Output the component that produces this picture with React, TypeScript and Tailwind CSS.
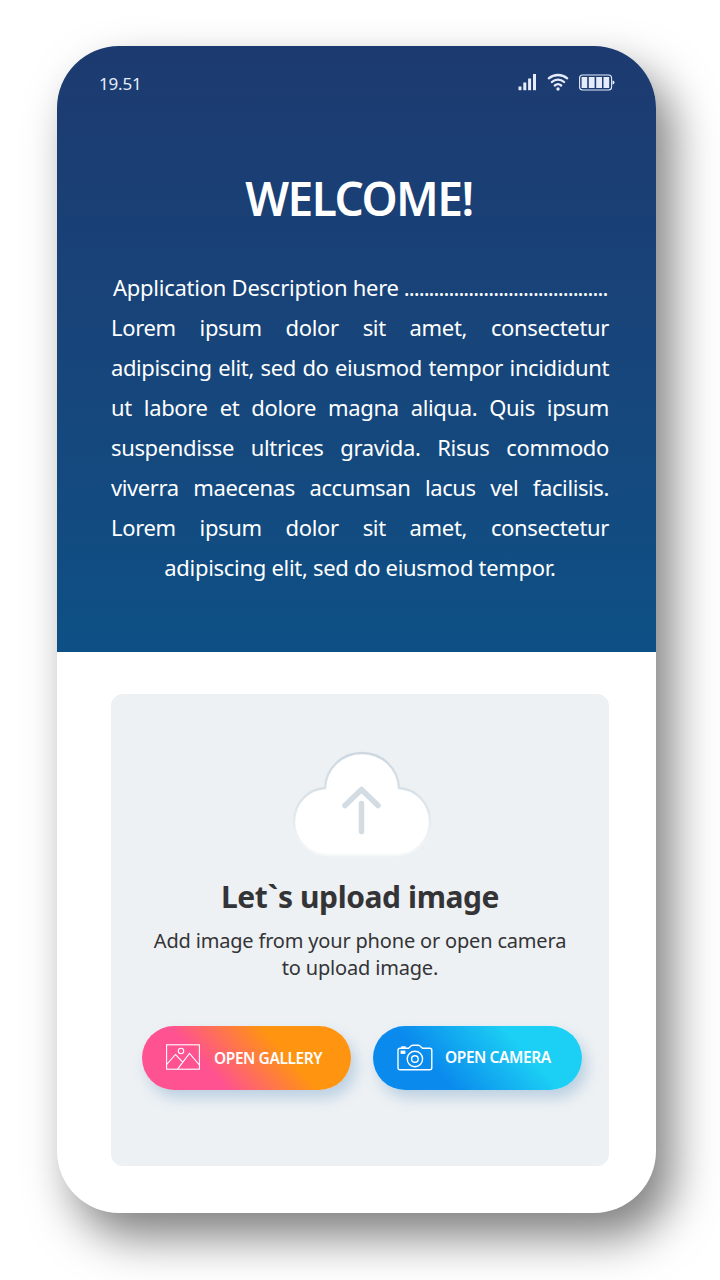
import type { ReactNode } from "react";

const paragraph = [
  { text: "Lorem ipsum dolor sit amet, consectetur", cls: "tracking-[-0.35px]" },
  { text: "adipiscing elit, sed do eiusmod tempor incididunt", cls: "tracking-[-0.4px]" },
  { text: "ut labore et dolore magna aliqua. Quis ipsum", cls: "tracking-[-0.35px]" },
  { text: "suspendisse ultrices gravida. Risus commodo", cls: "tracking-[-0.35px]" },
  { text: "viverra maecenas accumsan lacus vel facilisis.", cls: "tracking-[-0.4px]" },
  { text: "Lorem ipsum dolor sit amet, consectetur", cls: "tracking-[-0.35px]" },
];

function StatusIcons() {
  return (
    <svg width="98" height="20" viewBox="0 0 98 20" fill="none" className="text-[#e6ecfb]">
      <g fill="currentColor">
        <rect x="0.5" y="13.5" width="3" height="3.7" />
        <rect x="5.3" y="9.5" width="3" height="7.7" />
        <rect x="10.1" y="5.5" width="3" height="11.7" />
        <rect x="15" y="1" width="3" height="16.2" />
        <circle cx="40" cy="16" r="1.7" />
        <rect x="63.6" y="4" width="5.6" height="11" />
        <rect x="70.8" y="4" width="5.8" height="11" />
        <rect x="78.2" y="4" width="5.8" height="11" />
        <rect x="85.5" y="4" width="5.7" height="11" />
        <path d="M94.5 7.5q2 0 2 2t-2 2z" />
      </g>
      <g stroke="currentColor" strokeWidth="2.3" strokeLinecap="round">
        <path d="M30.8 5.3C36 .9 44 .9 49.2 5.3" />
        <path d="M33.9 9C37.4 5.8 42.6 5.8 46.1 9" />
        <path d="M36.8 12.5c1.9-1.6 4.5-1.6 6.4 0" />
      </g>
      <rect x="61.6" y="2" width="32" height="15" rx="3" stroke="currentColor" strokeWidth="1.1" />
    </svg>
  );
}

function CloudIcon() {
  return (
    <svg width="140" height="106" viewBox="0 0 140 106" fill="none">
      <defs>
        <linearGradient id="cloudEdge" x1="0" y1="0" x2="0" y2="1">
          <stop offset="0" stopColor="#ccd7e0" />
          <stop offset="0.5" stopColor="#dce5eb" />
          <stop offset="1" stopColor="#f6f9fa" />
        </linearGradient>
      </defs>
      <path
        d="M36 104C17 104 2 89 2 71c0-19 14-33 31-34C34 17 50 2 70 2s36 15 37 35c17 1 31 15 31 34 0 18-15 33-34 33Z"
        fill="white"
        stroke="url(#cloudEdge)"
        strokeWidth="2.4"
      />
      <g stroke="#d3dce3" strokeWidth="5.5" strokeLinecap="round" strokeLinejoin="round">
        <path d="M53 54.5 69.5 38.5 86 54.5" />
        <path d="M69.5 52.5V80.5" />
      </g>
    </svg>
  );
}

function GalleryIcon() {
  return (
    <svg width="34" height="26" viewBox="0 0 34 26" fill="none" stroke="white" strokeWidth="1.1" className="mb-[2px]">
      <rect x="0.6" y="0.8" width="32.8" height="24.4" />
      <circle cx="15" cy="7" r="2.7" />
      <path d="M0.6 20.5 9.5 10.5 17 18.3" />
      <path d="M11.5 25.2 23.5 9.3 33.4 21" />
    </svg>
  );
}

function CameraIcon() {
  return (
    <svg width="36" height="27" viewBox="0 0 36 27" fill="none" stroke="white" strokeWidth="1.4" className="mb-[2px]">
      <path d="M3.2 4.2H11.5L14.3 1.8Q15 1.2 16 1.2H21Q22 1.2 22.7 1.8L25.5 4.2H32.8Q34.8 4.2 34.8 6.2V23.7Q34.8 25.7 32.8 25.7H3Q1 25.7 1 23.7V6.2Q1 4.2 3.2 4.2Z" />
      <path d="M4.2 3.1H8.8" strokeWidth="1.6" />
      <rect x="4" y="7" width="4" height="2.5" fill="white" strokeWidth="0.8" />
      <circle cx="17.9" cy="15" r="7.7" />
      <circle cx="17.9" cy="15" r="3.3" />
    </svg>
  );
}

function ActionButton({ icon, label, className }: { icon: ReactNode; label: ReactNode; className: string }) {
  return (
    <button
      className={`flex h-16 w-[209px] items-center rounded-full pl-6 text-[15.5px] font-semibold tracking-[-0.42px] whitespace-nowrap text-white shadow-[5px_8px_14px_rgba(100,150,195,0.36)] ${className}`}
    >
      {icon}
      {label}
    </button>
  );
}

export default function App() {
  return (
    <div className="h-[1280px] w-[720px] overflow-hidden bg-white pt-[46px] pl-[57px] font-['Noto_Sans',sans-serif]">
      <main className="h-[1167px] w-[599px] rounded-[62px] bg-white shadow-[16px_24px_46px_rgba(0,0,0,0.5)]">
        <header className="h-[606px] rounded-t-[62px] bg-linear-to-b from-[#1c3a70] to-[#0d5085] pr-[47px] pl-[54px] text-white">
          <div className="-mr-[7px] -ml-3 flex h-[76px] items-start justify-between pt-[27px] text-[#e6ecfb]">
            <span className="text-[17px] leading-[22px] tracking-[-0.2px]">19.51</span>
            <StatusIcons />
          </div>
          <h1 className="mt-[46px] -ml-[2px] text-center text-[46px] leading-[60px] font-semibold tracking-[-1.5px]">WELCOME!</h1>
          <div className="mt-[39px] text-[22px] leading-[40px] whitespace-nowrap">
            <p className="ml-[2px] flex">
              <span className="tracking-[-0.25px]">Application Description here</span>
              <span className="ml-[5px] tracking-[-0.93px]">.........................................</span>
            </p>
            {paragraph.map((line, i) => (
              <p key={i} className={`[text-align-last:justify] ${line.cls}`}>
                {line.text}
              </p>
            ))}
            <p className="text-center tracking-[-0.3px]">adipiscing elit, sed do eiusmod tempor.</p>
          </div>
        </header>
        <section className="mt-[42px] ml-[54px] flex h-[472px] w-[498px] flex-col items-center rounded-xl bg-[#edf1f4] pt-[57px] text-[#343436]">
          <div className="ml-[3px]">
            <CloudIcon />
          </div>
          <h2 className="mt-[20px] text-[30px] leading-[40px] font-bold tracking-[-0.4px]">Let`s upload image</h2>
          <p className="mt-[10px] text-center text-[20px] leading-[27px] tracking-[-0.18px] whitespace-nowrap">
            Add image from your phone or open camera
            <br />
            to upload image.
          </p>
          <div className="mt-[45px] ml-[4px] flex gap-[22px]">
            <ActionButton
              icon={<GalleryIcon />}
              label={<span className="mt-[2px]">OPEN GALLERY</span>}
              className="gap-[14px] bg-[linear-gradient(48deg,#ff5290_32%,#ff9411_66%)]"
            />
            <ActionButton
              icon={<CameraIcon />}
              label="OPEN CAMERA"
              className="gap-[12px] bg-[linear-gradient(48deg,#0a8aed_30%,#1ccff4_70%)]"
            />
          </div>
        </section>
      </main>
    </div>
  );
}
